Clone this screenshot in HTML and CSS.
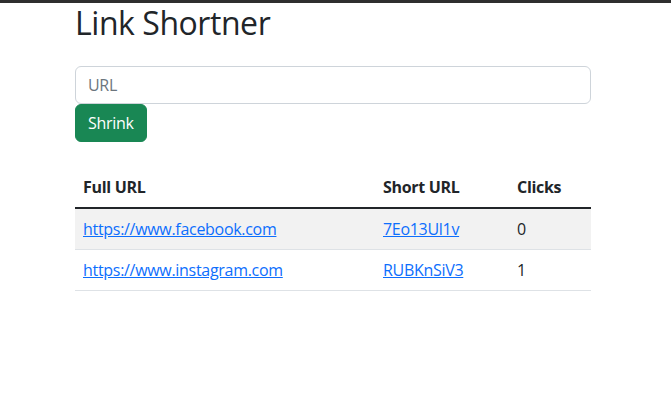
FILE: index.html
```html
<!DOCTYPE html>
<html lang="en">
<head>
<meta charset="utf-8">
<title>Link Shortner</title>
<link rel="stylesheet" href="styles.css">
</head>
<body>
<div class="topbar"></div>
<main class="container">
  <h1 class="title">Link Shortner</h1>
  <form class="shrink-form">
    <input class="url-input" type="url" placeholder="URL">
    <button class="btn-shrink" type="button">Shrink</button>
  </form>
  <table class="links">
    <thead>
      <tr>
        <th class="col-full">Full URL</th>
        <th class="col-short">Short URL</th>
        <th class="col-clicks">Clicks</th>
      </tr>
    </thead>
    <tbody>
      <tr class="striped">
        <td><a href="#">https://www.facebook.com</a></td>
        <td><a href="#">7Eo13Ul1v</a></td>
        <td>0</td>
      </tr>
      <tr>
        <td><a href="#">https://www.instagram.com</a></td>
        <td><a href="#">RUBKnSiV3</a></td>
        <td>1</td>
      </tr>
    </tbody>
  </table>
</main>
</body>
</html>
```
FILE: styles.css
```css
* { box-sizing: border-box; }
html, body {
  margin: 0;
  background: #fff;
  color: #212529;
  font-family: "Open Sans", "Noto Sans", sans-serif;
  font-size: 16px;
  line-height: 1.5;
  letter-spacing: -0.3px;
}
.topbar {
  height: 3px;
  background: #2e2e2e;
}
.container {
  width: 516px;
  margin-left: 75px;
}
.title {
  margin: 0;
  font-size: 32px;
  font-weight: 400;
  line-height: 40px;
  letter-spacing: -0.45px;
}
.shrink-form {
  margin-top: 23px;
  display: flex;
  flex-direction: column;
  align-items: flex-start;
}
.url-input {
  width: 100%;
  height: 38px;
  padding: 6px 12px;
  font: inherit;
  letter-spacing: inherit;
  color: #212529;
  border: 1px solid #ced4da;
  border-radius: 6px;
  outline: none;
}
.url-input::placeholder { color: #6c757d; }
.btn-shrink {
  height: 38px;
  padding: 6px 12px;
  font: inherit;
  letter-spacing: inherit;
  color: #fff;
  background: #198754;
  border: 1px solid #198754;
  border-radius: 6px;
}
.links {
  margin-top: 25px;
  width: 100%;
  border-collapse: collapse;
}
.links th, .links td {
  text-align: left;
  padding: 8px;
  height: 40px;
}
.links th { font-weight: 700; border-bottom: 2px solid #212529; }
.links td { border-bottom: 1px solid #dee2e6; }
.links tr.striped td { background: #f2f2f2; }
.col-full { width: 300px; }
.col-short { width: 134px; }
.links a { color: #0d6efd; }
```
